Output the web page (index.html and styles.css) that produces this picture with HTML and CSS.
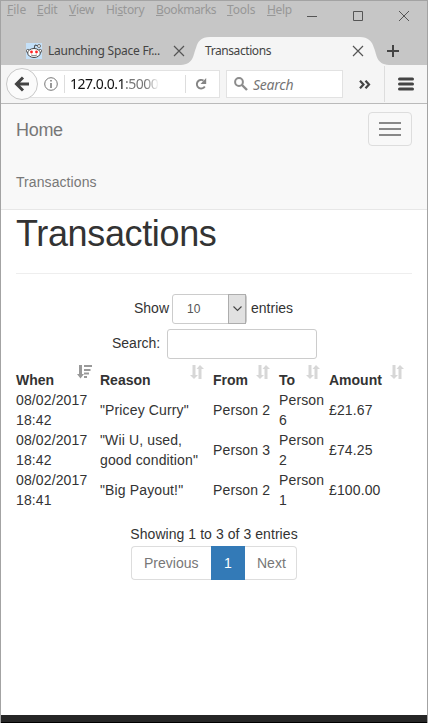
FILE: index.html
```
<!DOCTYPE html>
<html lang="en">
<head>
<meta charset="utf-8">
<title>Transactions</title>
<link rel="stylesheet" href="styles.css">
</head>
<body>
<div class="window">
  <header class="titlebar">
    <nav class="menu">
      <span class="m-file"><u>F</u>ile</span><span class="m-edit"><u>E</u>dit</span><span class="m-view"><u>V</u>iew</span><span class="m-history">Hi<u>s</u>tory</span><span class="m-bookmarks"><u>B</u>ookmarks</span><span class="m-tools"><u>T</u>ools</span><span class="m-help"><u>H</u>elp</span>
    </nav>
    <svg class="controls" width="105" height="12" viewBox="0 0 105 12" fill="none" stroke="#555"><path d="M0 6.500h10M46.500 1.500h9v9h-9zM92 1l10 10M102 1L92 11"/></svg>
  </header>
  <div class="tabs">
    <svg class="favicon" width="16" height="16" viewBox="0 0 16 16"><path fill="#c4e0f8" d="M0 0h16v16H0z"/><path d="M8 6l1-4 4 1" fill="none" stroke="#444"/><circle cx="13" cy="3" r="1.500" fill="#fff" stroke="#555" stroke-width=".8"/><circle cx="2" cy="8" r="1.700" fill="#fff" stroke="#555" stroke-width=".8"/><circle cx="14" cy="8" r="1.700" fill="#fff" stroke="#555" stroke-width=".8"/><ellipse cx="8" cy="10" rx="6.300" ry="4.500" fill="#fff" stroke="#444"/><circle cx="5.500" cy="9" r="1.400" fill="#f22"/><circle cx="10.500" cy="9" r="1.400" fill="#f22"/><path d="M5 12q3 1.500 6 0" fill="none" stroke="#666" stroke-width=".8"/></svg>
    <span class="tab-text first">Launching Space Fr...</span>
    <svg class="tab-close" width="12" height="12" viewBox="0 0 12 12"><path d="M1 1l10 10M11 1L1 11" stroke="#555" stroke-width="1.200"/></svg>
    <div class="active-tab">
      <svg class="tab-shape" width="210" height="28" viewBox="0 0 210 28"><path fill="#f5f5f5" d="M2 28C15 27 14 18 17 11C19 4 22 0 31 0H181C189 0 193 4 195 11C198 18 197 27 210 28z"/></svg>
      <span class="tab-text">Transactions</span>
      <svg class="tab-close" width="12" height="12" viewBox="0 0 12 12"><path d="M1 1l10 10M11 1L1 11" stroke="#555" stroke-width="1.200"/></svg>
    </div>
    <svg class="plus" width="12" height="12" viewBox="0 0 12 12"><path d="M0 6h12M6 0v12" stroke="#444" stroke-width="2"/></svg>
  </div>
  <div class="toolbar">
    <div class="back"><svg width="16" height="16" viewBox="0 0 16 16"><path d="M9 1.500L2.500 8L9 14.500M3 8h12" fill="none" stroke="#444" stroke-width="3"/></svg></div>
    <div class="address">
      <svg width="14" height="14" viewBox="0 0 14 14"><circle cx="7" cy="7" r="6.300" fill="none" stroke="#777"/><path d="M7 6v5M7 3v1.600" stroke="#777" stroke-width="1.500"/></svg>
      <i></i><span class="url">127.0.0.1<em>:5000</em></span><i class="second"></i>
      <svg class="reload" width="12" height="12" viewBox="0 0 12 12"><path d="M8.500 2.600A4.300 4.300 0 1 0 9.800 8.500" fill="none" stroke="#858585" stroke-width="1.900"/><path d="M11.200 0v6H5.500z" fill="#858585"/></svg>
    </div>
    <div class="search"><svg width="14" height="14" viewBox="0 0 14 14"><circle cx="5" cy="5" r="3.900" fill="none" stroke="#8c8c8c" stroke-width="2"/><path d="M8 8l5 5" stroke="#8c8c8c" stroke-width="2.400"/></svg><span>Search</span></div>
    <svg class="overflow" width="12" height="9" viewBox="0 0 12 9"><path d="M1 .7l3.500 3.800L1 8.300M6.500 .7L10 4.500L6.500 8.300" fill="none" stroke="#444" stroke-width="2.200"/></svg>
    <i class="toolbar-divider"></i>
    <svg class="hamburger" width="16" height="14" viewBox="0 0 16 14"><path d="M1.500 2h13M1.500 7h13M1.500 12h13" stroke="#444" stroke-width="3" stroke-linecap="round"/></svg>
  </div>
  <nav class="navbar">
    <div class="nav-top"><span class="brand">Home</span><div class="toggle"><b></b><b></b><b></b></div></div>
    <div class="nav-link">Transactions</div>
  </nav>
  <main>
    <h1>Transactions</h1>
    <hr>
    <div class="length"><span>Show</span><div class="select"><span>10</span><div class="arrow"><svg width="9" height="6" viewBox="0 0 9 6"><path d="M.5 .5l4 4l4-4" fill="none" stroke="#444" stroke-width="1.100"/></svg></div></div><span>entries</span></div>
    <div class="filter"><span>Search:</span><input aria-label="Search"></div>
    <svg width="0" height="0" class="defs"><symbol id="sort" viewBox="0 0 14 14"><path fill="#d7d7d7" d="M2.500 0h3v10H8l-4 4l-4-4h2.500zM8.500 14h3V4H14l-4-4l-3.500 4h2z"/></symbol><symbol id="sorted" viewBox="0 0 15 14"><path fill="#999" d="M2 0h3v9h2l-3.500 4.500L0 9h2zM7 0h8v2H7zM7 4h6.500v2H7zM7 7.500h5v2H7zM7 11h3v2H7z"/></symbol></svg>
    <table>
      <colgroup><col class="c1"><col class="c2"><col class="c3"><col class="c4"><col class="c5"></colgroup>
      <thead><tr>
        <th>When<svg class="sorted" width="15" height="14"><use href="#sorted"/></svg></th>
        <th>Reason<svg width="14" height="14"><use href="#sort"/></svg></th>
        <th>From<svg width="14" height="14"><use href="#sort"/></svg></th>
        <th>To<svg width="14" height="14"><use href="#sort"/></svg></th>
        <th>Amount<svg width="14" height="14"><use href="#sort"/></svg></th>
      </tr></thead>
      <tbody>
        <tr><td>08/02/2017<br>18:42</td><td>"Pricey Curry"</td><td>Person 2</td><td>Person<br>6</td><td>£21.67</td></tr>
        <tr><td>08/02/2017<br>18:42</td><td>"Wii U, used,<br>good condition"</td><td>Person 3</td><td>Person<br>2</td><td>£74.25</td></tr>
        <tr><td>08/02/2017<br>18:41</td><td>"Big Payout!"</td><td>Person 2</td><td>Person<br>1</td><td>£100.00</td></tr>
      </tbody>
    </table>
    <div class="info">Showing 1 to 3 of 3 entries</div>
    <div class="pagination"><span class="prev">Previous</span><span class="current">1</span><span class="next">Next</span></div>
  </main>
  <footer></footer>
</div>
</body>
</html>
```
FILE: styles.css
```
* { box-sizing: border-box; }
body { margin: 0; font: 14px/20px "Liberation Sans", Arial, sans-serif; color: #333; background: #fff; }
svg { display: block; flex: none; }
.window { width: 428px; height: 723px; border: 1px solid #a3a3a3; border-bottom: 0; display: flex; flex-direction: column; overflow: hidden; }
.titlebar { height: 36px; flex: none; background: #c6c6c6; display: flex; }
.menu { display: flex; font: 12px/18px "Noto Sans", sans-serif; color: #979797; padding-left: 6px; width: 306px; white-space: nowrap; }
.menu span { flex: none; }
.menu u { text-underline-offset: 1px; }
.m-file { width: 30px; }
.m-edit { width: 32px; letter-spacing: -.3px; }
.m-view { width: 37px; letter-spacing: -.3px; }
.m-history { width: 50px; letter-spacing: -.3px; }
.m-bookmarks { width: 71px; letter-spacing: -.4px; }
.m-tools { width: 40px; letter-spacing: -.2px; }
.m-help { letter-spacing: -.3px; }
.controls { margin-top: 9px; }
.tabs { height: 28px; flex: none; background: #c6c6c6; display: flex; align-items: center; padding-left: 25px; }
.tab-text { font: 12px/18px "Noto Sans", sans-serif; color: #444; white-space: nowrap; letter-spacing: -.25px; }
.tab-text.first { width: 125px; margin-left: 6px; letter-spacing: -.25px; }
.active-tab { width: 208px; height: 28px; margin-left: -6px; padding-left: 26px; display: flex; align-items: center; position: relative; }
.active-tab .tab-shape { position: absolute; left: 0; top: 0; }
.active-tab .tab-text { position: relative; width: 147px; letter-spacing: -.42px; }
.active-tab .tab-close { position: relative; }
.plus { position: relative; }
.toolbar { height: 39px; flex: none; background: #f5f5f5; border-bottom: 1px solid #bababa; display: flex; align-items: center; }
.back { width: 32px; height: 32px; border: 1px solid #c8c8c8; border-radius: 50%; background: #fbfbfb; margin-left: 5px; display: flex; align-items: center; justify-content: center; position: relative; z-index: 1; }
.address { width: 191px; height: 28px; margin-left: -9px; background: #fff; border: 1px solid #e2e2e2; display: flex; align-items: center; padding-left: 14px; }
.address i { width: 1px; height: 18px; background: #ddd; margin-left: 6px; }
.url { font: 14px/20px "Noto Sans", sans-serif; color: #111; letter-spacing: -.48px; overflow: hidden; width: 89px; margin: 0 20px 0 5px; white-space: nowrap; -webkit-mask-image: linear-gradient(90deg, #000 85%, transparent); }
.url em { font-style: normal; color: #777; }
.reload { margin-left: 9px; }
.search { width: 117px; height: 28px; margin-left: 6px; border: 1px solid #e2e2e2; background: #fff; display: flex; align-items: center; padding-left: 7px; font: italic 14px/20px "Noto Sans", sans-serif; color: #757575; letter-spacing: -.25px; }
.search span { margin: 2px 0 0 5px; }
.overflow { margin-left: 16px; }
.toolbar-divider { width: 1px; height: 36px; background: #ddd; margin-left: 13px; }
.hamburger { margin-left: 13px; }
.navbar { height: 106px; flex: none; background: #f8f8f8; border-bottom: 1px solid #e7e7e7; padding: 8px 15px 0 15px; color: #777; }
.nav-top { display: flex; justify-content: space-between; }
.brand { font-size: 18px; padding-top: 8px; letter-spacing: -.3px; }
.toggle { width: 44px; height: 34px; border: 1px solid #ddd; border-radius: 4px; padding: 9px 10px; display: flex; flex-direction: column; gap: 4px; }
.toggle b { height: 2px; background: #888; }
.nav-link { margin-top: 26px; letter-spacing: .08px; }
main { flex: 1; padding: 4px 15px 0; }
h1 { font-size: 36px; line-height: 40px; font-weight: 400; margin: 0; letter-spacing: -.36px; }
hr { border: 0; border-top: 1px solid #eee; margin: 19px 0 20px; }
.length { display: flex; align-items: center; height: 30px; padding-left: 118px; }
.length > span { position: relative; top: -1px; }
.select { width: 75px; height: 30px; border: 1px solid #ccc; border-radius: 3px; margin: 0 4px 0 3px; display: flex; align-items: center; justify-content: space-between; padding-left: 14px; font-size: 12px; color: #555; }
.arrow { width: 18px; height: 30px; background: #e1e1e1; border: 1px solid #adadad; display: flex; align-items: center; justify-content: center; }
.filter { display: flex; align-items: center; margin-top: 5px; padding-left: 96px; }
.filter span { position: relative; top: -1px; }
.filter input { width: 150px; height: 30px; border: 1px solid #ccc; border-radius: 3px; margin-left: 7px; }
.defs { position: absolute; }
table { table-layout: fixed; width: 396px; border-collapse: collapse; margin-top: 11px; }
.c1 { width: 84px; }
.c2 { width: 113px; }
.c3 { width: 66px; }
.c4 { width: 50px; }
.c5 { width: 83px; }
th, td { padding: 0; text-align: left; vertical-align: middle; white-space: nowrap; }
td { letter-spacing: .13px; }
th { position: relative; height: 20px; }
th svg { position: absolute; right: 9px; top: -5px; }
th:last-child svg { right: 8px; }
th .sorted { right: 8px; }
.info { margin-top: 14px; text-align: center; letter-spacing: .06px; }
.pagination { display: flex; justify-content: center; margin-top: 2px; color: #777; }
.pagination span { height: 34px; border: 1px solid #ddd; padding: 6px 12px; }
.pagination .prev { width: 80px; border-right: 0; border-radius: 4px 0 0 4px; }
.pagination .current { width: 34px; color: #fff; background: #337ab7; border-color: #337ab7; }
.pagination .next { width: 52px; border-left: 0; border-radius: 0 4px 4px 0; }
footer { height: 8px; flex: none; background: #262626; border-bottom: 1px solid #000; }
```
